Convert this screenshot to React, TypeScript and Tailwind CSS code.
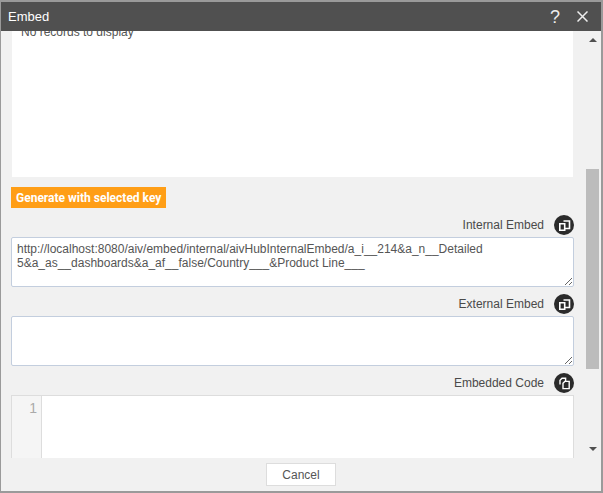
const CopyIcon = ({ alt }: { alt?: boolean }) => (
  <span className="flex h-5 w-5 items-center justify-center rounded-full bg-[#2b2b2b]">
    {alt ? (
      <svg width="13" height="13" viewBox="0 0 13 13" fill="none" stroke="#fff" strokeWidth="1.4">
        <path d="M2 7.5V3.2L4 1.3h3.6v3" />
        <path d="M5 6.2l1.8-1.8h4.4v7.2H5z" fill="#2b2b2b" />
      </svg>
    ) : (
      <svg width="13" height="13" viewBox="0 0 13 13" fill="none" stroke="#fff" strokeWidth="1.6">
        <path d="M5.5 2h6v7.5H7" />
        <path d="M1.8 4.7h4.9v6.6H1.8z" fill="#2b2b2b" />
      </svg>
    )}
  </span>
);

const Label = ({ text, alt }: { text: string; alt?: boolean }) => (
  <div className="flex h-5 items-center justify-end gap-[10px] text-[12px] text-[#4a4a4a]">
    <span>{text}</span>
    <CopyIcon alt={alt} />
  </div>
);

const Field = ({ value, h }: { value?: string; h: string }) => (
  <textarea
    readOnly
    value={value ?? ""}
    className={`${h} block w-full rounded-[2px] border border-[#c3cede] bg-white px-[5px] py-[4px] font-['Liberation_Sans'] text-[12px] leading-[14px] text-[#555555] outline-none`}
  />
);

export default function App() {
  return (
    <div className="h-[493px] w-[603px] overflow-hidden bg-[#9a9a9a] pt-[2px] pb-[2px] pl-[1px] pr-[2px] font-['Liberation_Sans']">
      <div className="flex h-full flex-col bg-[#f1f1f1]">
        <div className="flex h-[29px] shrink-0 items-center justify-between bg-[#505050] pl-[7px] pr-[13px] text-white">
          <span className="text-[13px]">Embed</span>
          <div className="flex items-center gap-[17px]">
            <span className="text-[18px] leading-none text-[#eeeeee]">?</span>
            <svg width="11" height="11" viewBox="0 0 11 11" stroke="#eeeeee" strokeWidth="1.5">
              <path d="M.5.5l10 10M10.5.5l-10 10" />
            </svg>
          </div>
        </div>
        <div className="flex min-h-0 flex-1">
          <div className="min-w-0 flex-1 overflow-hidden pl-[10px] pr-[12px]">
            <div className="mx-[1px] h-[146px] overflow-hidden bg-white pl-[9px] text-[12px] leading-[14px] text-[#555555]">
              <div className="-mt-[6px]">No records to display</div>
            </div>
            <button className="mt-[10px] block h-[21px] bg-[#ff9e16] px-[5px] font-['Roboto'] text-[12px] font-bold text-white">
              Generate with selected key
            </button>
            <div className="mt-[7px]"><Label text="Internal Embed" /></div>
            <div className="mt-[2px]">
              <Field h="h-[50px]" value={"http://localhost:8080/aiv/embed/internal/aivHubInternalEmbed/a_i__214&a_n__Detailed\n5&a_as__dashboards&a_af__false/Country___&Product Line___"} />
            </div>
            <div className="mt-[7px]"><Label text="External Embed" /></div>
            <div className="mt-[2px]"><Field h="h-[50px]" /></div>
            <div className="mt-[7px]"><Label text="Embedded Code" alt /></div>
            <div className="mt-[2px] flex h-[90px] border border-[#dddddd] bg-white">
              <div className="w-[30px] border-r border-[#dddddd] bg-[#f5f5f5] pr-[4px] pt-[2px] text-right text-[14px] text-[#aaaaaa]">1</div>
              <div className="flex-1" />
            </div>
          </div>
          <div className="flex w-[15px] shrink-0 flex-col items-center bg-[#f1f1f1]">
            <div className="flex h-[17px] items-center pr-[2px]">
              <div className="h-0 w-0 border-x-[4px] border-b-[4px] border-x-transparent border-b-[#505050]" />
            </div>
            <div className="mt-[121px] mr-[2px] h-[200px] w-[13px] bg-[#bcbcbc]" />
            <div className="flex flex-1 items-end pb-[7px] pr-[2px]">
              <div className="h-0 w-0 border-x-[4px] border-t-[4px] border-x-transparent border-t-[#505050]" />
            </div>
          </div>
        </div>
        <div className="flex h-[33px] shrink-0 items-center justify-center bg-[#f1f1f1]">
          <button className="h-[23px] w-[70px] border border-[#dddddd] bg-white text-[12px] text-[#555555]">Cancel</button>
        </div>
      </div>
    </div>
  );
}
